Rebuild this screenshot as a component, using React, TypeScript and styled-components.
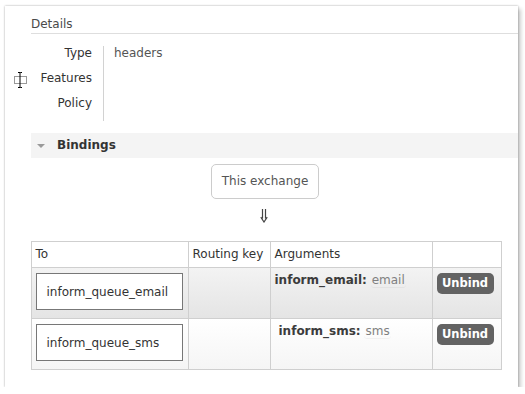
import React from "react";
import styled, { createGlobalStyle } from "styled-components";

const Global = createGlobalStyle`
  html, body { margin: 0; padding: 0; background: #fff; }
  body { font-family: "DejaVu Sans", Verdana, sans-serif; font-size: 12px; line-height: 15px; color: #333; }
`;

const Page = styled.div`
  padding: 6px 0 0 5px;
`;

const Panel = styled.div`
  position: relative;
  box-sizing: border-box;
  width: 513px;
  height: 381px;
  background: #fff;
  padding: 11px 0 0 26px;
  box-shadow: 0 0 2px rgba(0, 0, 0, 0.35), 3px 3px 4px rgba(0, 0, 0, 0.2);
`;

const Heading = styled.h2`
  margin: 0;
  font-size: 12px;
  font-weight: normal;
  line-height: 15px;
  color: #4a4a4a;
  padding-bottom: 1px;
  border-bottom: 1px solid #dedede;
`;

const DetailsGrid = styled.div`
  display: grid;
  grid-template-columns: 73px auto;
  grid-auto-rows: 25px;
  margin-top: 12px;
`;

const Label = styled.div`
  text-align: right;
  padding-right: 11px;
  border-right: 1px solid #d2d2d2;
  color: #333;
`;

const Value = styled.div`
  padding-left: 10px;
  color: #555;
`;

const SectionBar = styled.div`
  display: flex;
  align-items: center;
  height: 25px;
  margin-top: 12px;
  background: #f4f4f4;
  padding-left: 6px;
  gap: 12px;
  font-weight: bold;
  color: #333;
`;

const Triangle = styled.span`
  width: 0;
  height: 0;
  border-left: 4px solid transparent;
  border-right: 4px solid transparent;
  border-top: 4px solid #9a9a9a;
`;

const BindBody = styled.div`
  width: 470px;
  display: flex;
  flex-direction: column;
  align-items: center;
`;

const ExchangeBox = styled.div`
  margin-top: 6px;
  margin-left: -2px;
  padding: 9px 10px;
  border: 1px solid #ccc;
  border-radius: 5px;
  color: #555;
`;

const ArrowIcon = styled.svg`
  display: block;
  margin: 10px 0 18px -4px;
`;

const Table = styled.table`
  border-collapse: collapse;
  width: 470px;
  table-layout: fixed;
`;

const Th = styled.th<{ w: number }>`
  box-sizing: border-box;
  width: ${(p) => p.w}px;
  text-align: left;
  font-weight: normal;
  color: #333;
  border: 1px solid #cfcfcf;
  padding: 5px 4px 5px 4px;
  background: #fff;
  height: 26px;
`;

const Tr = styled.tr<{ alt: boolean }>`
  background: ${(p) =>
    p.alt
      ? "linear-gradient(to bottom, #f3f3f3 0%, #e4e4e4 100%)"
      : "linear-gradient(to bottom, #ffffff 0%, #f5f5f5 100%)"};
`;

const Td = styled.td`
  border: 1px solid #cfcfcf;
  padding: 5px 5px 8px 4px;
  vertical-align: top;
`;

const QueueBox = styled.div`
  box-sizing: border-box;
  width: 147px;
  height: 37px;
  border: 1px solid #777;
  background: #fff;
  padding: 11px 10px 9px;
  color: #333;
  white-space: nowrap;
`;

const Arg = styled.div<{ indent: number }>`
  padding-left: ${(p) => p.indent}px;
  white-space: nowrap;
`;

const ArgKey = styled.span`
  font-weight: bold;
  color: #3c3c3c;
`;

const ArgVal = styled.span`
  color: #808080;
  border-radius: 3px;
  padding: 0 1px;
  box-shadow: 0 1px 0 rgba(0, 0, 0, 0.04);
`;

const UnbindButton = styled.button`
  box-sizing: border-box;
  width: 57px;
  height: 21px;
  border: none;
  border-radius: 5px;
  background: #636363;
  color: #fff;
  font-family: "DejaVu Sans", Verdana, sans-serif;
  font-weight: bold;
  font-size: 11.5px;
  line-height: 21px;
  padding: 0;
`;

const Cursor = styled.svg`
  position: absolute;
  left: 9px;
  top: 66px;
`;

const rows = [
  { queue: "inform_queue_email", key: "inform_email:", val: "email", indent: 0 },
  { queue: "inform_queue_sms", key: "inform_sms:", val: "sms", indent: 4 },
];

export default function App() {
  return (
    <>
      <Global />
      <Page>
        <Panel>
          <Cursor width="14" height="16" viewBox="0 0 14 16">
            <rect x="0.5" y="4.5" width="12" height="7" fill="none" stroke="#333" strokeWidth="1" strokeDasharray="1 1" />
            <path d="M4 0.5h2.5M8 0.5h-1.5M4 15.5h2.5M8 15.5h-1.5M6 0.5v15" stroke="#000" strokeWidth="1" fill="none" />
          </Cursor>
          <Heading>Details</Heading>
          <DetailsGrid>
            <Label>Type</Label>
            <Value>headers</Value>
            <Label>Features</Label>
            <Value />
            <Label>Policy</Label>
            <Value />
          </DetailsGrid>
          <SectionBar>
            <Triangle />
            <span>Bindings</span>
          </SectionBar>
          <BindBody>
            <ExchangeBox>This exchange</ExchangeBox>
            <ArrowIcon width="8" height="14" viewBox="0 0 8 14">
              <path d="M2.5 0v9.5M5.5 0v9.5M0.8 8.2L4 13L7.2 8.2" stroke="#444" strokeWidth="1.2" fill="none" />
            </ArrowIcon>
            <Table>
              <thead>
                <tr>
                  <Th w={157}>To</Th>
                  <Th w={82}>Routing key</Th>
                  <Th w={162}>Arguments</Th>
                  <Th w={69}></Th>
                </tr>
              </thead>
              <tbody>
                {rows.map((r, i) => (
                  <Tr key={r.queue} alt={i === 0}>
                    <Td>
                      <QueueBox>{r.queue}</QueueBox>
                    </Td>
                    <Td></Td>
                    <Td>
                      <Arg indent={r.indent}>
                        <ArgKey>{r.key}</ArgKey> <ArgVal>{r.val}</ArgVal>
                      </Arg>
                    </Td>
                    <Td>
                      <UnbindButton>Unbind</UnbindButton>
                    </Td>
                  </Tr>
                ))}
              </tbody>
            </Table>
          </BindBody>
        </Panel>
      </Page>
    </>
  );
}
